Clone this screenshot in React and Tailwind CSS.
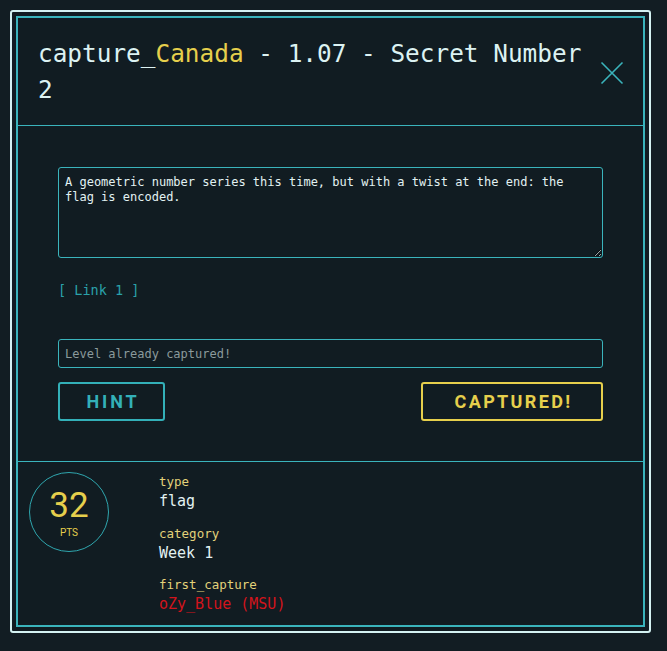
export default function App() {
  const mono = { fontFamily: '"DejaVu Sans Mono", "Liberation Mono", monospace' };
  const sans = { fontFamily: 'Roboto, "Liberation Sans", sans-serif' };

  return (
    <div className="min-h-[651px] w-[667px] bg-[#121d23] pt-[10px] pl-[10px]">
      <div className="w-[641px] rounded-[3px] border-2 border-[#d4f2f2] bg-[#111c22] p-[4px]">
        <div className="border-2 border-[#3ab4bc]" style={mono}>
          <div className="flex items-start justify-between pt-[18px] pb-[17px] pl-[20px] pr-[19px]">
            <h1 className="w-[555px] text-[24.4px] leading-[36px] text-[#dcf2f2]">
              capture_<span className="text-[#e6cf4c]">Canada</span> - 1.07 - Secret Number 2
            </h1>
            <button className="mt-[25px] text-[#3ab4bc]">
              <svg width="24" height="24" viewBox="0 0 24 24" fill="none" stroke="currentColor" strokeWidth="1.6">
                <path d="M1.5 1.5 L22.5 22.5 M22.5 1.5 L1.5 22.5" />
              </svg>
            </button>
          </div>

          <div className="border-t-[1.5px] border-[#3ab4bc] px-[40px] pt-[41px] pb-[40px]">
            <textarea
              readOnly
              defaultValue="A geometric number series this time, but with a twist at the end: the flag is encoded."
              className="block h-[91px] w-full rounded-[3px] border border-[#3ab4bc] bg-transparent px-[6px] py-[7px] text-[12px] leading-[15px] text-[#e2f2f2] outline-none"
              style={mono}
            />
            <div className="mt-[22px] text-[13.5px] leading-[20px] text-[#2aa1aa]">[ Link 1 ]</div>
            <input
              placeholder="Level already captured!"
              className="mt-[39px] block h-[29px] w-full rounded-[3px] border border-[#3ab4bc] bg-transparent px-[6px] text-[12px] text-[#e2f2f2] placeholder:text-[#8b9a9c] outline-none"
              style={mono}
            />
            <div className="mt-[14px] flex items-center justify-between">
              <button
                className="h-[39px] w-[107px] rounded-[3px] border-2 border-[#33b0b8] pl-[3px] text-[18px] font-bold tracking-[0.16em] text-[#33b0b8]"
                style={sans}
              >
                HINT
              </button>
              <button
                className="h-[39px] w-[182px] rounded-[3px] border-2 border-[#e6cf4c] pl-[3px] text-[18px] font-bold tracking-[0.13em] text-[#e6cf4c]"
                style={sans}
              >
                CAPTURED!
              </button>
            </div>
          </div>

          <div className="flex border-t-[1.5px] border-[#3ab4bc] pt-[10px] pb-[11px] pl-[11px]">
            <div className="flex h-[80px] w-[80px] shrink-0 flex-col items-center justify-center rounded-full border border-[#2fa6ae] text-[#e6cf4c]" style={sans}>
              <div className="mt-[2px] text-[35px] leading-[36px]">32</div>
              <div className="mt-[3px] text-[10px] leading-[12px]">PTS</div>
            </div>
            <div className="ml-[50px] pt-[1px]">
              <div className="text-[12.5px] leading-[18px] text-[#e3d27a]">type</div>
              <div className="text-[15px] leading-[20px] text-[#e2f2f2]">flag</div>
              <div className="mt-[14px] text-[12.5px] leading-[18px] text-[#e3d27a]">category</div>
              <div className="text-[15px] leading-[20px] text-[#e2f2f2]">Week 1</div>
              <div className="mt-[13px] text-[12.5px] leading-[18px] text-[#e3d27a]">first_capture</div>
              <div className="text-[15px] leading-[20px] text-[#d2141c]">oZy_Blue (MSU)</div>
            </div>
          </div>
        </div>
      </div>
    </div>
  );
}
